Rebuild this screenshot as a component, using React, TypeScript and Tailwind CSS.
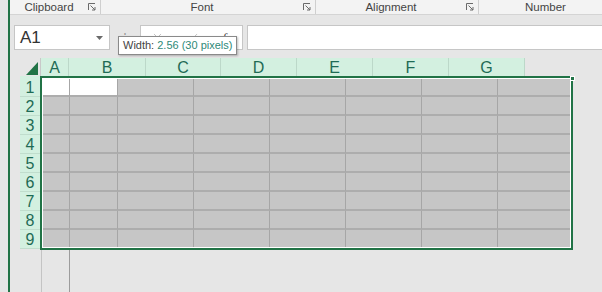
import { Check, X } from "lucide-react";

const GREEN = "#217346";

const headers: { label: string; w: string }[] = [
  { label: "A", w: "w-[28px]" },
  { label: "B", w: "w-[77px]" },
  { label: "C", w: "w-[75px]" },
  { label: "D", w: "w-[76px]" },
  { label: "E", w: "w-[76px]" },
  { label: "F", w: "w-[76px]" },
  { label: "G", w: "w-[76px]" },
];

const rows = [1, 2, 3, 4, 5, 6, 7, 8, 9];
const cols = 8;

function Launcher() {
  return (
    <svg width="8" height="8" viewBox="0 0 8 8" className="shrink-0">
      <path d="M0.5 7V0.5H7" fill="none" stroke="#6a6a6a" strokeWidth="1" />
      <path d="M2.5 2.5L7 7M7 4V7H4" fill="none" stroke="#6a6a6a" strokeWidth="1" />
    </svg>
  );
}

function RibbonGroup({ label, width, last }: { label: string; width?: string; last?: boolean }) {
  return (
    <div className={`flex items-center h-full ${width ?? "flex-1 pl-[10px]"} ${last ? "" : "border-r border-[#cfcfcf]"}`}>
      <span className="flex-1 text-center text-[11.5px] leading-none text-[#444] pt-[1px]">{label}</span>
      {!last && (
        <span className="mr-[4px]">
          <Launcher />
        </span>
      )}
    </div>
  );
}

export default function App() {
  return (
    <div className="relative w-[602px] h-[292px] overflow-hidden bg-[#e6e6e6] font-['Liberation_Sans',Arial,sans-serif] flex">
      <div className="w-[8px] shrink-0" />
      <div className="flex-1 flex flex-col border-l-2 border-[#217346] min-w-0">
        {/* Ribbon group labels */}
        <div className="h-[15px] shrink-0 flex bg-[#f3f3f3] border-b border-[#d4d4d4]">
          <RibbonGroup label="Clipboard" width="w-[91px]" />
          <RibbonGroup label="Font" width="w-[215px]" />
          <RibbonGroup label="Alignment" width="w-[163px]" />
          <RibbonGroup label="Number" last />
        </div>

        {/* Formula bar */}
        <div className="mt-[10px] h-[25px] shrink-0 flex">
          <div className="ml-[4px] w-[96px] bg-white border border-[#c6c6c6] flex items-center pl-[5px] pr-[6px]">
            <span className="flex-1 text-[17px] text-[#333]">A1</span>
            <svg width="7" height="4" viewBox="0 0 7 4">
              <path d="M0 0H7L3.5 4Z" fill="#6a6a6a" />
            </svg>
          </div>
          <div className="w-[30px] flex items-center justify-center text-[12px] text-[#999] leading-none">⋮</div>
          <div className="w-[103px] bg-white border border-[#c6c6c6] flex items-center pl-[10px] pr-[10px] gap-[22px]">
            <X size={13} color="#b5b5b5" strokeWidth={1.5} />
            <Check size={13} color="#b5b5b5" strokeWidth={1.5} />
            <span className="ml-auto text-[13px] italic text-[#444] font-['Liberation_Serif',serif]">fx</span>
          </div>
          <div className="ml-[4px] flex-1 bg-white border border-[#c6c6c6] border-r-0" />
        </div>

        <div className="h-[8px] shrink-0" />

        {/* Column headers */}
        <div className="h-[18px] shrink-0 flex ml-[10px]">
          <div className="w-[21px] relative border-r border-[#c9c9c9]">
            <svg width="21" height="18" viewBox="0 0 21 18" className="block">
              <path d="M18 4V17H6Z" fill={GREEN} />
            </svg>
          </div>
          {headers.map((h) => (
            <div
              key={h.label}
              className={`${h.w} bg-[#d3f0e0] border-r border-[#bcd8c9] flex items-center justify-center text-[16px] leading-none text-[#1f6b55] pt-[1px]`}
            >
              {h.label}
            </div>
          ))}
        </div>

        {/* Body */}
        <div className="shrink-0 flex ml-[10px]">
          <div className="w-[20px] flex flex-col">
            <div className="h-[2px] bg-[#d3f0e0]" />
            {rows.map((r) => (
              <div
                key={r}
                className="h-[19px] bg-[#d3f0e0] border-b border-[#c0ddcd] flex items-center justify-center text-[16px] leading-none text-[#1f6b55] pt-[2px]"
              >
                {r}
              </div>
            ))}
          </div>
          <div className="relative w-[533px] h-[174px] border-2 border-[#217346]">
            <div className="h-full border border-white grid grid-cols-[27px_48px_76px_76px_76px_76px_76px_72px] grid-rows-[18px_19px_19px_19px_19px_19px_19px_19px_17px]">
              {rows.map((r) =>
                Array.from({ length: cols }).map((_, c) => (
                  <div
                    key={`${r}-${c}`}
                    className={`${r === 1 && c < 2 ? "bg-white" : "bg-[#c6c6c6]"} ${c < cols - 1 ? "border-r border-r-[#a6a6a6]" : ""} ${r < 9 ? "border-b-2 border-b-[#adadad]" : ""}`}
                  />
                ))
              )}
            </div>
            <div className="absolute top-[-2px] right-[-4px] w-[5px] h-[5px] bg-[#217346] border border-white" />
          </div>
        </div>

        {/* Empty area below grid */}
        <div className="flex-1 flex">
          <div className="ml-[31px] w-[29px] border-l border-[#c4c4c4] border-r border-r-[#9c9c9c]" />
        </div>
      </div>

      {/* Column width tooltip */}
      <div className="absolute left-[118px] top-[36px] h-[19px] px-[4px] bg-white border border-[#8a8a8a] shadow-[1px_1px_2px_rgba(0,0,0,0.25)] flex items-center text-[11px] leading-none whitespace-nowrap">
        <span className="text-[#444]">Width:&nbsp;</span>
        <span className="text-[#2e8a78]">2.56 (30 pixels)</span>
      </div>
    </div>
  );
}
